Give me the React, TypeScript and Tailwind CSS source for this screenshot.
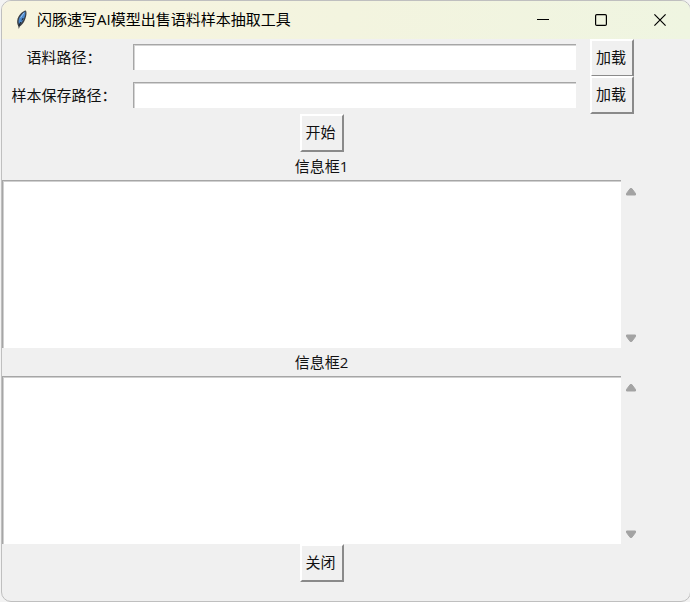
import type { ReactNode } from "react";

function Feather() {
  return (
    <svg width="16" height="20" viewBox="0 0 16 20" fill="none">
      <path d="M11.8 0.4C8.6 1 5 4.6 3.6 8.6C2.8 11.6 3 14 4.2 16L4.8 19L5.8 16.4C9.4 14.4 11.8 9.4 12.4 4.6C12.6 2.8 12.5 1.2 11.8 0.4Z" fill="#3d4147" />
      <path d="M11.4 1.6C8.8 3 5.6 6.2 4.8 9.8C4.5 12 4.6 13.2 5.2 14.2C8.6 12.4 11.4 7.4 11.4 1.6Z" fill="#4b8ad0" />
      <path d="M9.8 3L6.6 7.8" stroke="#9dc2ea" strokeWidth="1" />
      <path d="M9.2 8L7.8 10.4M6.6 12L5 15.8" stroke="#15202c" strokeWidth="1" />
    </svg>
  );
}

function TitleBar() {
  return (
    <header className="flex h-[38px] items-center bg-gradient-to-r from-[#f7f4df] via-[#f3f4df] to-[#eff5e1] text-black">
      <div className="ml-3 mr-[7px] -mt-px">
        <Feather />
      </div>
      <h1 className="-mt-0.5 flex-1 whitespace-nowrap text-[15px] leading-5">闪豚速写AI模型出售语料样本抽取工具</h1>
      <div className="flex items-center gap-[47px] pr-6">
        <button aria-label="minimize">
          <svg className="block" width="12" height="12" viewBox="0 0 12 12">
            <path d="M0 5.5H12" stroke="#000" />
          </svg>
        </button>
        <button aria-label="maximize" className="-ml-px">
          <svg className="block" width="12" height="12" viewBox="0 0 12 12">
            <rect x="0.6" y="0.6" width="10.8" height="10.8" rx="1.2" fill="none" stroke="#000" strokeWidth="1.2" />
          </svg>
        </button>
        <button aria-label="close">
          <svg className="block" width="12" height="12" viewBox="0 0 12 12">
            <path d="M0.4 0.4L11.6 11.6M11.6 0.4L0.4 11.6" stroke="#000" strokeWidth="1.2" />
          </svg>
        </button>
      </div>
    </header>
  );
}

function Button({ children }: { children: ReactNode }) {
  return (
    <button className="h-[38px] w-11 shrink-0 border-2 border-t-white border-l-white border-r-[#8a8a8a] border-b-[#8a8a8a] bg-[#f0f0f0] pb-0.5 text-[15px] leading-5 whitespace-nowrap">
      <span className="-mr-0.5 -ml-1">{children}</span>
    </button>
  );
}

function PathRow({ label }: { label: string }) {
  return (
    <div className="flex h-[37.5px] items-center">
      <label className="w-[131px] pr-[7px] pb-px text-center whitespace-nowrap">{label}</label>
      <input className="mr-[14px] mb-px h-[26px] w-[443px] border-t border-l border-[#a6a6a6] bg-white shadow-[inset_1px_1px_0_#d4d4d4] outline-none" />
      <Button>加载</Button>
    </div>
  );
}

function InfoBox() {
  return (
    <div className="flex h-[168px]">
      <textarea className="block h-full w-[619px] resize-none border-t border-l border-[#a6a6a6] bg-white shadow-[inset_1px_1px_0_#d0d0d0] outline-none" />
      <div className="flex w-5 flex-col items-center justify-between pt-[7px] pb-[5px]">
        <svg width="12" height="10" viewBox="0 0 12 10">
          <path d="M5.2 1.5H6.8L10.5 6.5V8H1.5V6.5Z" fill="#a3a3a3" stroke="#a3a3a3" strokeLinejoin="round" />
        </svg>
        <svg width="12" height="10" viewBox="0 0 12 10">
          <path d="M5.2 8.5H6.8L10.5 3.5V2H1.5V3.5Z" fill="#a3a3a3" stroke="#a3a3a3" strokeLinejoin="round" />
        </svg>
      </div>
    </div>
  );
}

export default function App() {
  return (
    <div className="h-[602px] w-[690px] overflow-hidden bg-[#f3f3f3] pl-px">
      <div className="h-full w-[690px] overflow-hidden rounded-[10px] border border-[#bfbfbf] bg-[#f0f0f0] font-['Open_Sans','Noto_Sans_CJK_SC',sans-serif] text-[15px] leading-5 text-[#111]">
        <TitleBar />
        <main className="w-[639px]">
          <PathRow label="语料路径：" />
          <PathRow label="样本保存路径：" />
          <div className="flex h-[38px] justify-center">
            <Button>开始</Button>
          </div>
          <p className="flex h-7 items-center justify-center pb-px">信息框1</p>
          <InfoBox />
          <p className="flex h-7 items-center justify-center pb-px">信息框2</p>
          <InfoBox />
          <div className="flex justify-center">
            <Button>关闭</Button>
          </div>
        </main>
      </div>
    </div>
  );
}
